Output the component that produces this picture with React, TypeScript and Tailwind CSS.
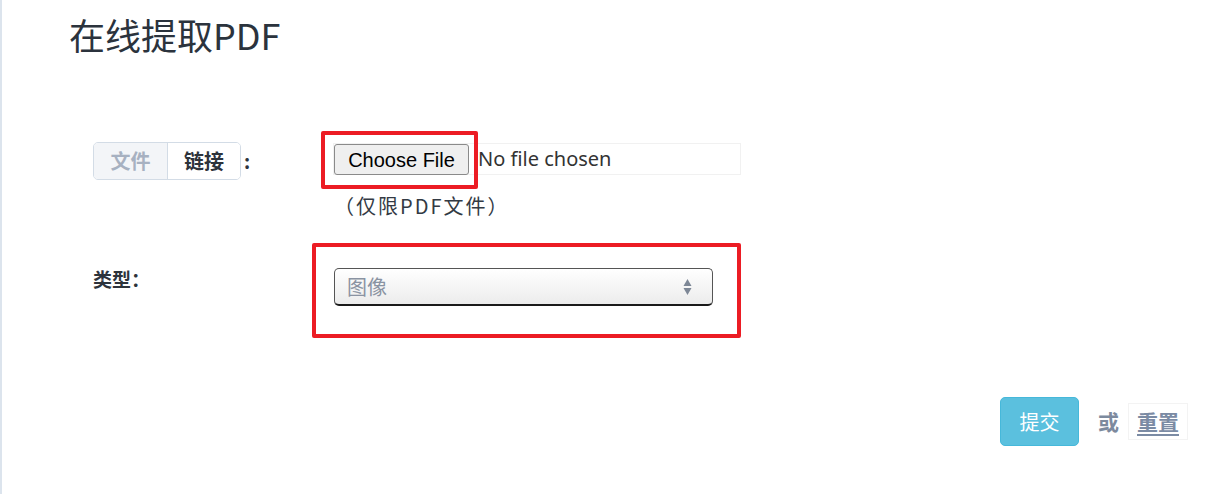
const cjk = "font-['Noto_Sans_CJK_SC',sans-serif]";

export default function App() {
  return (
    <div className={`relative h-[494px] w-full bg-white border-l-2 border-[#dce4ed] ${cjk}`}>
      <h1 className="pl-[67px] pt-[10px] text-[36px] leading-[48px] text-[#2b333d]">
        在线提取PDF
      </h1>

      <div className="pl-[91px] pt-[84px]">
        {/* source row */}
        <div className="flex items-start">
          <div className="flex w-[240px] items-start">
            <div className="flex h-[38px] overflow-hidden rounded-[5px] border border-[#d3dce6]">
              <button className="w-[73px] bg-[#f3f5f8] text-[20px] font-bold text-[#a7b1c1]">
                文件
              </button>
              <button className="w-[73px] border-l border-[#d3dce6] bg-white text-[20px] font-bold text-[#2d333b]">
                链接
              </button>
            </div>
            <span className="ml-[3px] mt-[5px] text-[19px] font-bold text-[#2d333b]">:</span>
          </div>

          <div className="pt-[1px]">
            <div className="relative flex h-[32px] w-[408px] items-center border border-[#f1f1f1]">
              <button className="h-[31px] w-[135px] rounded-[3px] border border-[#8a8a8a] bg-[#efefef] font-['Liberation_Sans',sans-serif] text-[20px] text-black">
                Choose File
              </button>
              <span className="ml-[9px] font-['Noto_Sans',sans-serif] text-[20px] text-[#333]">
                No file chosen
              </span>
              <div className="pointer-events-none absolute left-[-13px] top-[-13px] h-[58px] w-[157px] rounded-[2px] border-[4px] border-[#ec1c24]" />
            </div>
            <p className="mt-[17px] pl-[1px] text-[20px] leading-[28px] tracking-[2px] text-[#333a44]">（仅限PDF文件）</p>
          </div>
        </div>

        {/* type row */}
        <div className="mt-[45px] flex items-start">
          <div className="w-[241px] text-[19px] font-bold text-[#2d333b]">类型：</div>
          <div className="relative mt-[3px]">
            <div className="flex h-[38px] w-[379px] items-center justify-between rounded-[5px] border border-[#555] border-b-2 border-b-[#1a1a1a] bg-gradient-to-b from-white to-[#ececec] pl-[12px] pr-[20px]">
              <span className="text-[20px] text-[#8a93a2]">图像</span>
              <svg width="9" height="18" viewBox="0 0 9 18" className="fill-[#7d8796]">
                <path d="M4.5 1 L8.5 8 L0.5 8 Z" />
                <path d="M0.5 10 L8.5 10 L4.5 17 Z" />
              </svg>
            </div>
            <div className="pointer-events-none absolute left-[-22px] top-[-25px] h-[95px] w-[429px] rounded-[2px] border-[4px] border-[#ec1c24]" />
          </div>
        </div>
      </div>

      {/* actions */}
      <div className="mt-[91px] flex items-center justify-end pr-[40px]">
        <button className="h-[49px] w-[79px] rounded-[5px] border border-[#46b8da] bg-[#5bc0de] text-[20px] text-white">
          提交
        </button>
        <span className="ml-[19px] text-[21px] font-bold text-[#7d8a9e]">或</span>
        <a className="ml-[9px] border border-[#f3f3f3] px-[8px] py-[2px] text-[21px] font-bold text-[#7b8ba4] underline underline-offset-4">
          重置
        </a>
      </div>
    </div>
  );
}
